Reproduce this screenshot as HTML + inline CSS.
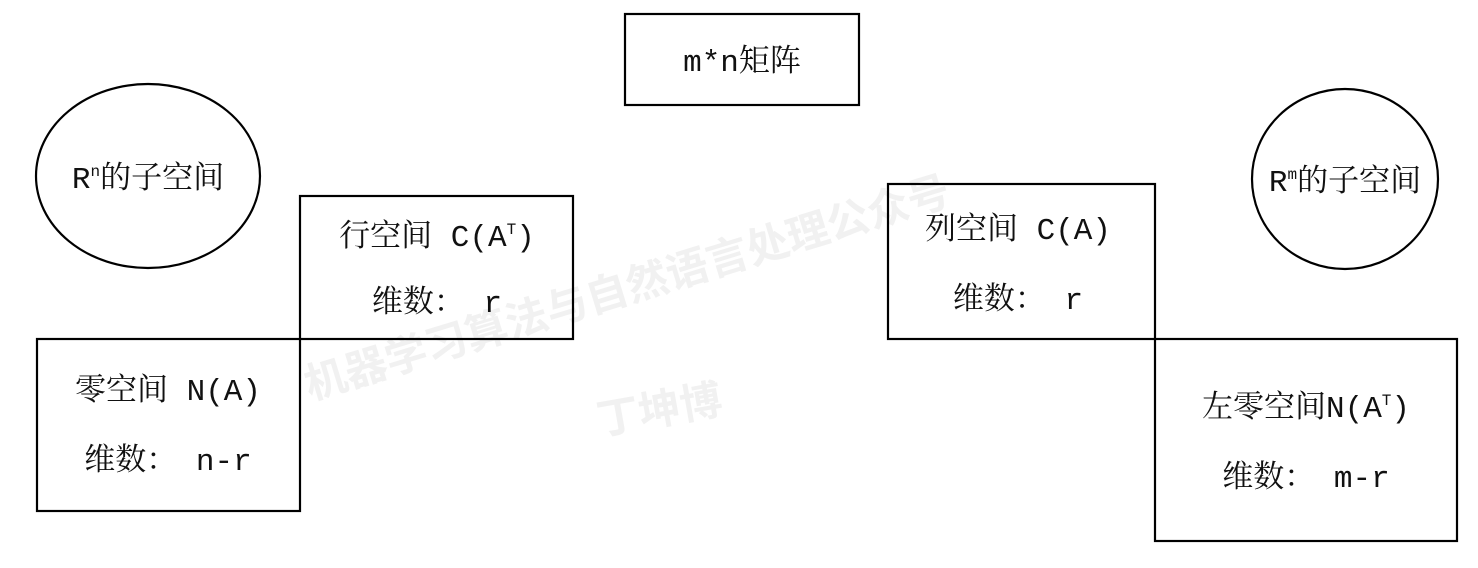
<!DOCTYPE html>
<html><head><meta charset="utf-8"><style>
html,body{margin:0;padding:0;background:#fff;}
svg{display:block;}
text{font-family:"Liberation Mono","Noto Serif CJK SC",serif;font-size:31px;fill:#111;}
.wm{font-family:"Noto Sans CJK SC",sans-serif;font-size:42px;fill:#f1f1f1;font-weight:bold;}
</style></head><body>
<svg width="1478" height="568" viewBox="0 0 1478 568">
<text class="wm" x="310" y="400" transform="rotate(-17 310 400)">机器学习算法与自然语言处理公众号</text>
<text class="wm" x="600" y="435" transform="rotate(-10 600 435)">丁坤博</text>
<g fill="none" stroke="#000" stroke-width="2.2">
<rect x="625" y="14" width="234" height="91"/>
<ellipse cx="148" cy="176" rx="112" ry="92"/>
<ellipse cx="1345" cy="179" rx="93" ry="90"/>
<rect x="300" y="196" width="273" height="143"/>
<rect x="37" y="339" width="263" height="172"/>
<rect x="888" y="184" width="267" height="155"/>
<rect x="1155" y="339" width="302" height="202"/>
</g>
<text x="742" y="71" text-anchor="middle" font-size="29">m*n矩阵</text>
<text x="148" y="188" text-anchor="middle">R<tspan font-size="16" dy="-12">n</tspan><tspan dy="12">的子空间</tspan></text>
<text x="1345" y="191" text-anchor="middle">R<tspan font-size="16" dy="-12">m</tspan><tspan dy="12">的子空间</tspan></text>
<text x="437" y="246" text-anchor="middle">行空间 C(A<tspan font-size="16" dy="-12">T</tspan><tspan dy="12">)</tspan></text>
<text x="437" y="312" text-anchor="middle">维数： r</text>
<text x="1018" y="239" text-anchor="middle">列空间 C(A)</text>
<text x="1018" y="309" text-anchor="middle">维数： r</text>
<text x="168" y="400" text-anchor="middle">零空间 N(A)</text>
<text x="168" y="470" text-anchor="middle">维数： n-r</text>
<text x="1306" y="417" text-anchor="middle">左零空间N(A<tspan font-size="16" dy="-12">T</tspan><tspan dy="12">)</tspan></text>
<text x="1306" y="487" text-anchor="middle">维数： m-r</text>
</svg>
</body></html>
